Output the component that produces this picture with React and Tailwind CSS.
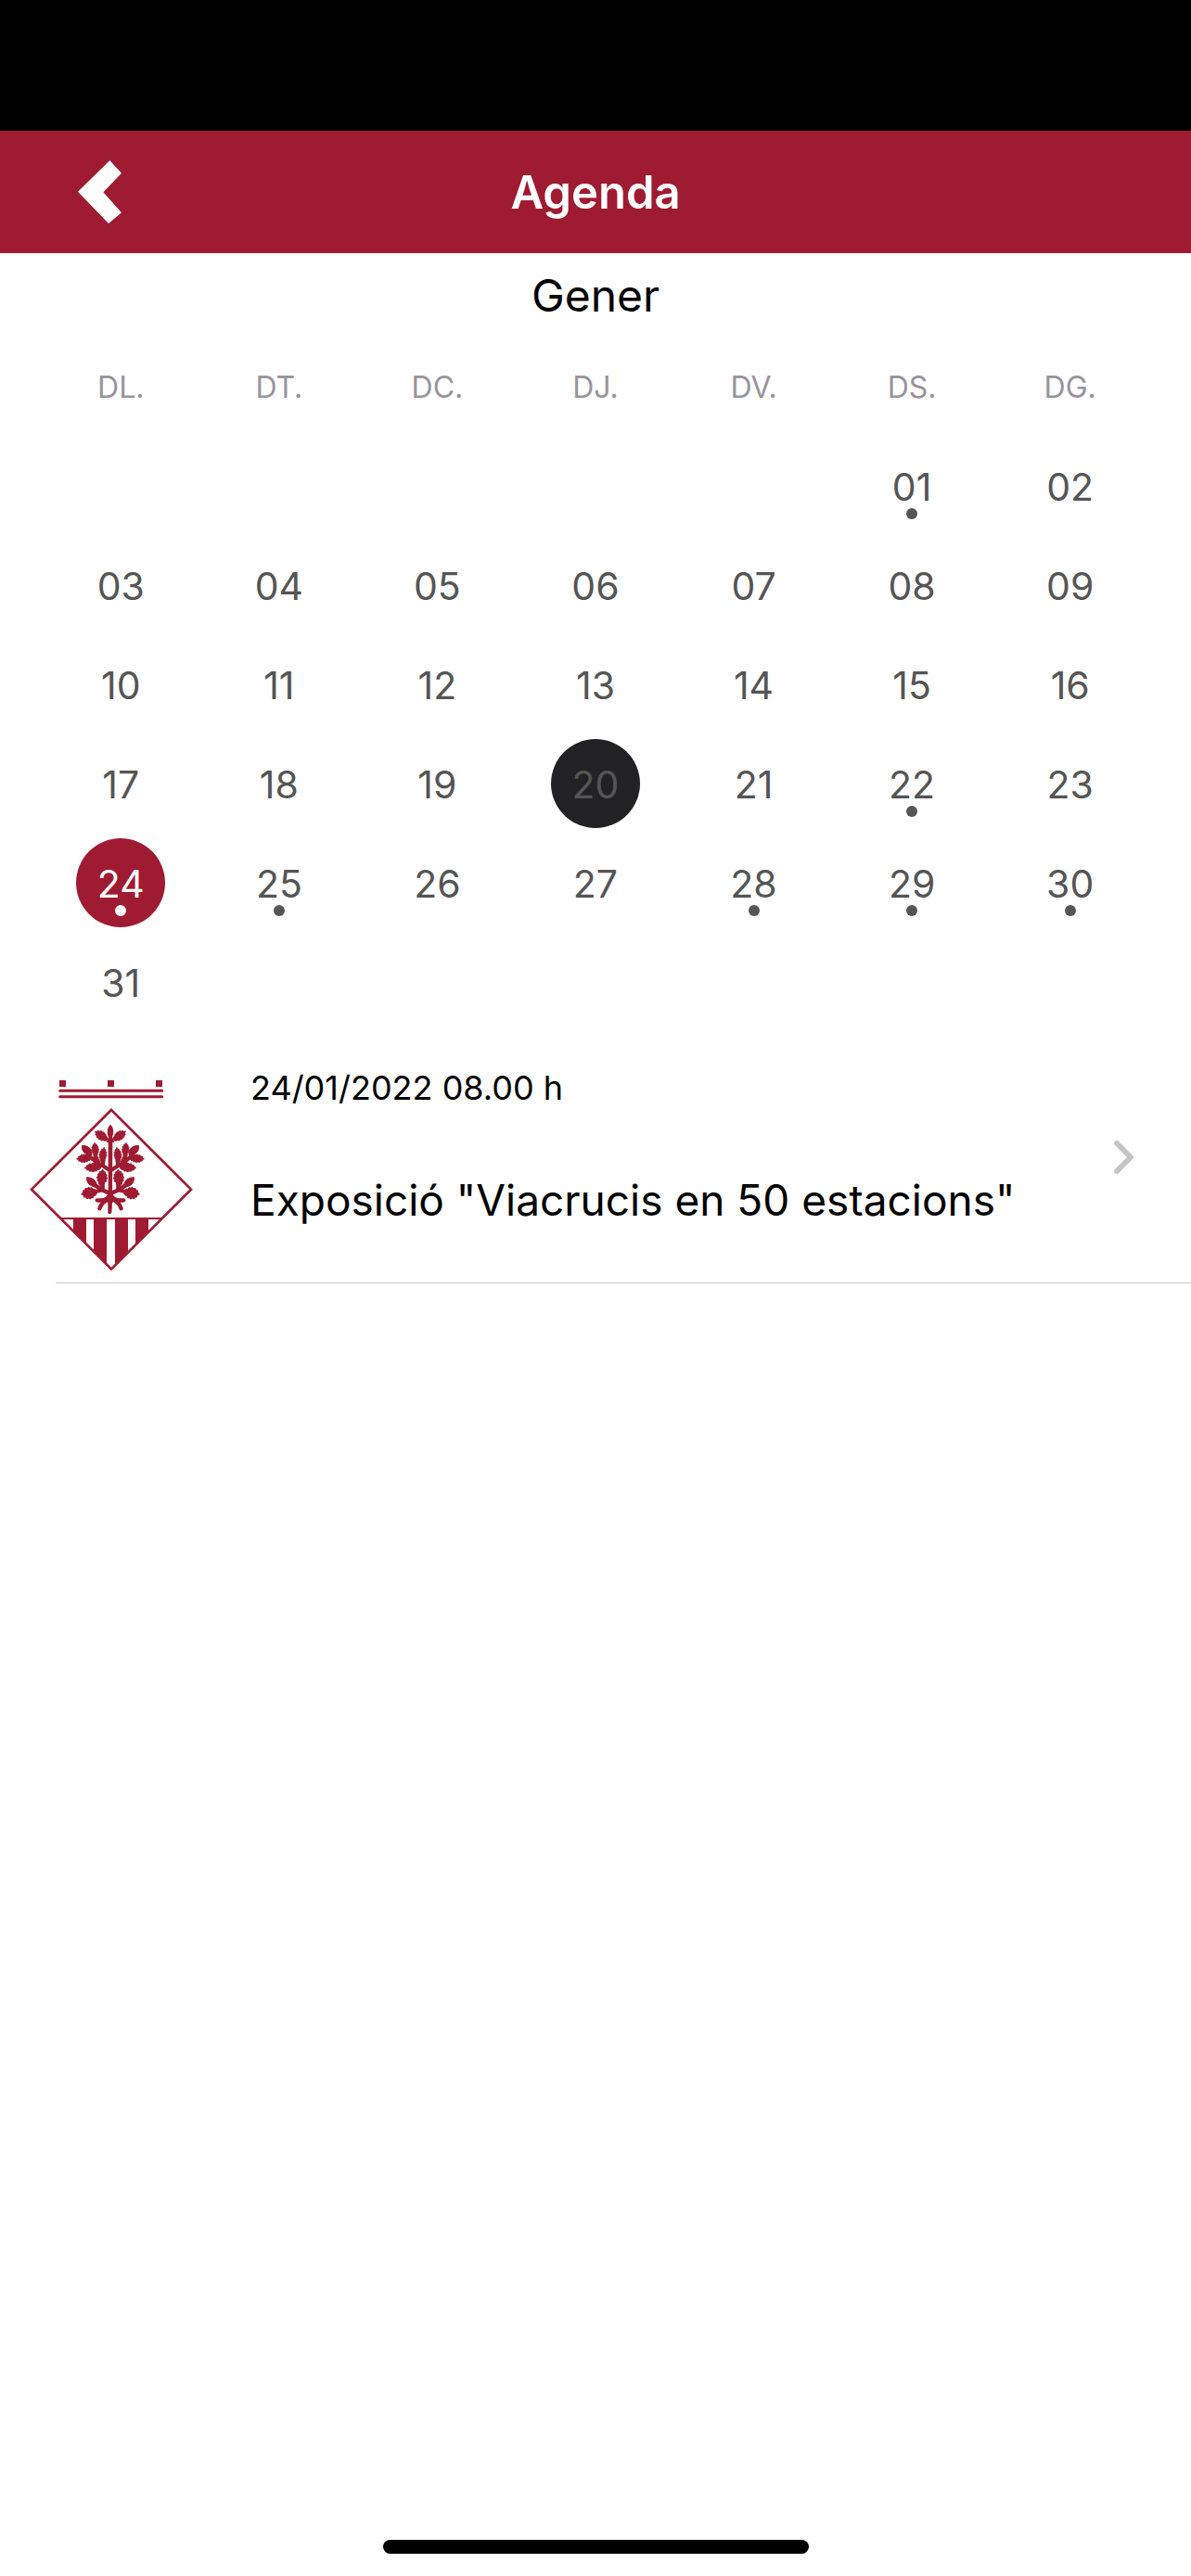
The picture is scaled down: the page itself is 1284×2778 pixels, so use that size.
import { useState } from 'react'

const weekdays = ['DL.', 'DT.', 'DC.', 'DJ.', 'DV.', 'DS.', 'DG.']

const weeks = [
  [null, null, null, null, null, 1, 2],
  [3, 4, 5, 6, 7, 8, 9],
  [10, 11, 12, 13, 14, 15, 16],
  [17, 18, 19, 20, 21, 22, 23],
  [24, 25, 26, 27, 28, 29, 30],
  [31, null, null, null, null, null, null]
]

const today = 20
const daysWithEvents = [1, 22, 24, 25, 28, 29, 30]

const events = [
  { id: 1, date: '24/01/2022 08.00 h', title: 'Exposició "Viacrucis en 50 estacions"' }
]

function BackIcon() {
  return (
    <svg viewBox="0 0 141 204" className="w-[47px] h-[68px]" fill="currentColor" aria-hidden="true">
      <path d="M0 101 103 0l38 41-59 62 59 66-42 35z" />
    </svg>
  )
}

const LEAF =
  'M-26 -3L-20 -8L-15 -8L-11 -13L-6 -12L-1 -15L4 -12L10 -13L13 -9L19 -8L20 -3L26 0L20 3L19 8L13 9L10 13L4 12L-1 15L-6 12L-11 13L-15 8L-20 8L-26 3Z'

// one half of the oak, the other half is mirrored
function OakBranches() {
  return (
    <>
      <g stroke="currentColor" strokeWidth="3" strokeLinejoin="round">
        <path d={LEAF} transform="translate(327 254) rotate(-35) scale(.9 .95)" />
        <path d={LEAF} transform="translate(321 316) rotate(-98) scale(.92 .82)" />
        <path d={LEAF} transform="translate(346 299) rotate(-85) scale(.85 .78)" />
        <path d="M358 318C352 298 370 286 388 286C392 304 378 318 358 318Z" />
        <path d={LEAF} transform="translate(383 328) rotate(3) scale(.9)" />
        <path d={LEAF} transform="translate(354 357) rotate(3) scale(1 .95)" />
        <path d={LEAF} transform="translate(324 390) rotate(-95) scale(1 1.1)" />
        <path d="M342 420C338 400 356 389 373 389C376 406 362 420 342 420Z" />
        <path d={LEAF} transform="translate(366 440) rotate(8) scale(.95 1.25)" />
      </g>
      <path
        d="M299 366Q335 345 370 318M322 350L319 330M336 340L346 318M338 338L356 352M299 440Q325 432 355 408M325 430L360 438M322 430L322 405M300 454Q318 466 340 463M300 456Q326 470 332 490"
        fill="none"
        stroke="currentColor"
        strokeWidth="13"
        strokeLinecap="round"
      />
    </>
  )
}

function Crest() {
  return (
    <svg viewBox="36 66 528 630" className="w-44 h-[210px] shrink-0 text-[#9f1b32]" fill="currentColor" aria-hidden="true">
      <rect x="132" y="75" width="21" height="21" />
      <rect x="288" y="75" width="21" height="21" />
      <rect x="444" y="75" width="21" height="21" />
      <path d="M134 109H464M134 128H464" stroke="currentColor" strokeWidth="9" strokeLinecap="round" />
      <path d="M300 171L558 428L300 686L42 428Z" fill="none" stroke="currentColor" strokeWidth="8" />
      <path d="M137 522H463" stroke="currentColor" strokeWidth="6" />
      <path d="M177 523H219V605L177 563ZM243 523H285V671L243 629ZM312 523H354V632L312 674ZM378 523H420V566L378 608Z" />
      <path d="M290 262H304L303 440L314 460L303 472L301 504Q295 512 289 504L289 472L278 460L290 440Z" />
      <path d="M297 218C308 226 309 246 303 258L310 276H284L291 258C285 246 286 226 297 218Z" />
      <OakBranches />
      <g transform="translate(594 0) scale(-1 1)">
        <OakBranches />
      </g>
    </svg>
  )
}

function Day({ day, selected, onSelect }) {
  let style = 'text-[#555555]'
  if (day === today) style = 'bg-[#222224] text-[#555555]'
  if (selected) style = 'bg-[#9f1b32] text-white'

  return (
    <button
      type="button"
      onClick={() => onSelect(day)}
      className={`relative mx-auto flex size-24 items-center justify-center rounded-full pt-[3px] text-[41px] leading-none ${style}`}
    >
      {String(day).padStart(2, '0')}
      {daysWithEvents.includes(day) && (
        <span className="absolute bottom-3 left-1/2 size-3 -translate-x-1/2 rounded-full bg-current" />
      )}
    </button>
  )
}

export default function App() {
  const [selectedDay, setSelectedDay] = useState(24)

  return (
    <div className="flex min-h-screen flex-col bg-white font-['Inter',sans-serif] text-black">
      <div className="h-[141px] bg-black" />

      <header className="grid h-[132px] grid-cols-[1fr_auto_1fr] items-center bg-[#9f1b32] px-[84px] text-white">
        <button type="button" aria-label="Enrere" className="justify-self-start">
          <BackIcon />
        </button>
        <h1 className="text-[49px] leading-none font-semibold">Agenda</h1>
      </header>

      <main>
        {/* Calendar */}
        <section className="px-[45px] pt-4 pb-px">
          <h2 className="text-center text-[48px] leading-[60px]">Gener</h2>
          <table className="mt-3 w-full table-fixed">
            <thead>
              <tr className="h-[109px]">
                {weekdays.map((name) => (
                  <th key={name} scope="col" className="p-0 pt-1 text-[32px] font-normal text-[#98949c]">
                    {name}
                  </th>
                ))}
              </tr>
            </thead>
            <tbody>
              {weeks.map((week, i) => (
                <tr key={i} className="h-[107px]">
                  {week.map((day, j) => (
                    <td key={j} className="p-0">
                      {day && <Day day={day} selected={day === selectedDay} onSelect={setSelectedDay} />}
                    </td>
                  ))}
                </tr>
              ))}
            </tbody>
          </table>
        </section>

        {/* Events of the selected day */}
        <ul>
          {events.map((event) => (
            <li key={event.id}>
              <a href="#event" className="flex items-center pr-[60px] pl-8">
                <div className="pt-[49px] pb-[11px]">
                  <Crest />
                </div>
                <div className="flex flex-1 flex-col gap-[73px] self-start pt-10 pl-[62px]">
                  <p className="text-[36px] leading-10">{event.date}</p>
                  <p className="text-[46px] leading-[56px]">{event.title}</p>
                </div>
                <svg viewBox="0 0 24 38" className="h-[38px] w-6" fill="none" aria-hidden="true">
                  <path d="M4 4L19 19L4 34" stroke="#c5c5c7" strokeWidth="6" strokeLinecap="round" strokeLinejoin="round" />
                </svg>
              </a>
              <div className="ml-[60px] h-px bg-[#c8c7cc]" />
            </li>
          ))}
        </ul>
      </main>

      <footer className="mt-auto flex justify-center pb-6">
        <div className="h-[15px] w-[459px] rounded-full bg-black" />
      </footer>
    </div>
  )
}
